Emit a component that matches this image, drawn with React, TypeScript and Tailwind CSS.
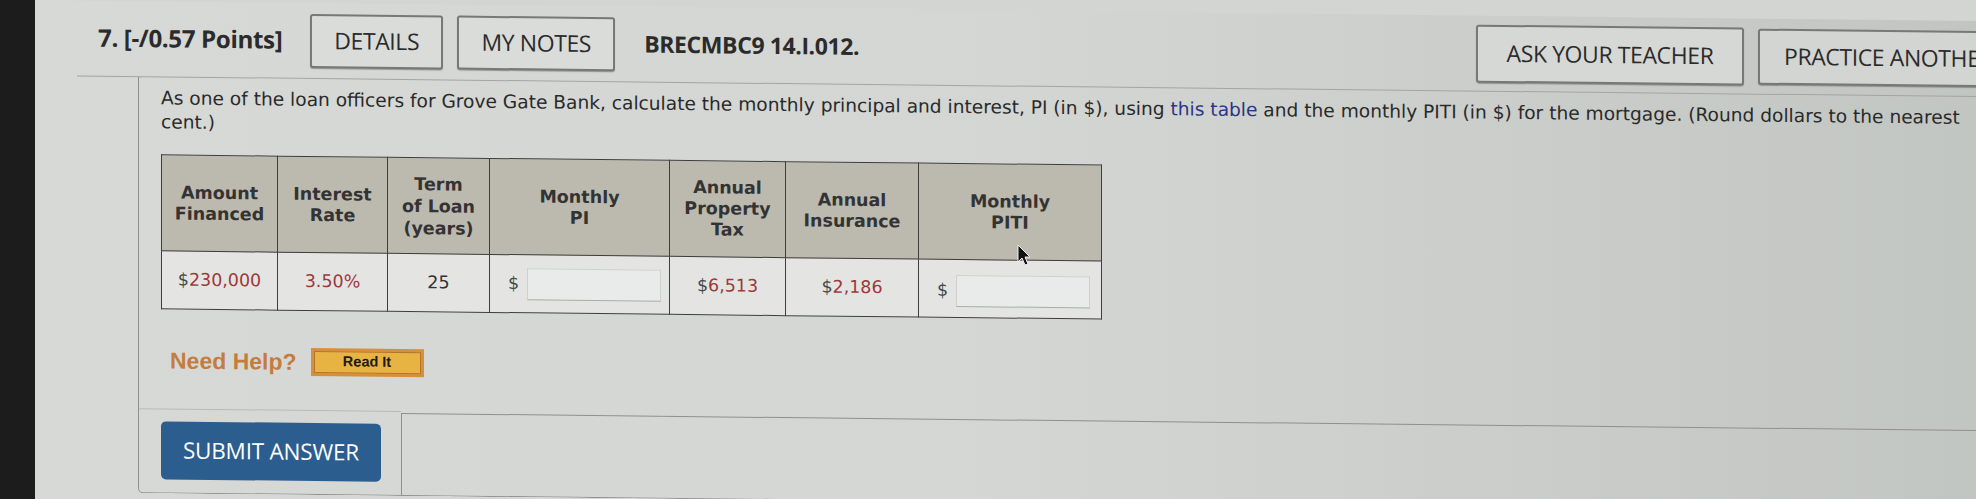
const cols = [116, 110, 102, 180, 116, 133, 183];

const Money: React.FC<{ value: string }> = ({ value }) => (
  <span>
    <span className="text-[#3f4a4a]">$</span>
    <span className="text-[#9c3a3a]">{value}</span>
  </span>
);

const AnswerBox: React.FC<{ top: string }> = ({ top }) => (
  <div className={`flex items-center pl-[18px] ${top}`}>
    <span className="text-[#3f4a4a]">$</span>
    <div className="ml-[8px] w-[134px] h-[32px] bg-[#e9eaea] border border-[#cfd1d0] border-b-[#a9abaa]" />
  </div>
);

export default function App() {
  return (
    <div className="relative w-[1976px] h-[499px] flex overflow-hidden bg-[#d2d5d2]">
      <div className="w-[35px] shrink-0 bg-[#1c1c1c]" />
      {/* the photo is slightly sheared: right side sits lower */}
      <div className="flex-1 h-[499px] flex flex-col origin-top-left skew-y-[0.62deg] bg-linear-to-r from-[#d7d9d7] via-[#d3d6d3] to-[#c2c6c3]">
        {/* question header */}
        <div className="h-[76px] shrink-0 ml-[42px] pl-[21px] border-b border-[#a3a5a3] flex items-center font-['Open_Sans',sans-serif] text-[#2b2b2b]">
          <span className="text-[24.2px] font-bold tracking-[-0.4px]">7. [-/0.57 Points]</span>
          <button className="ml-[28px] w-[133px] h-[54px] border-2 border-[#777977] rounded-[3px] bg-[#dadcda] shadow-[0_1px_1px_rgba(0,0,0,0.3)] text-[23px] tracking-[-0.4px]">
            DETAILS
          </button>
          <button className="ml-[14px] w-[158px] h-[54px] border-2 border-[#777977] rounded-[3px] bg-[#dadcda] shadow-[0_1px_1px_rgba(0,0,0,0.3)] text-[23px] tracking-[-0.4px]">
            MY NOTES
          </button>
          <span className="ml-[29px] text-[23px] font-bold tracking-[-0.4px]">BRECMBC9 14.I.012.</span>
          <div className="ml-auto -mr-[42px] flex items-center gap-[14px]">
            <button className="w-[268px] h-[58px] border-2 border-[#777977] rounded-[3px] bg-[#d6d8d6] shadow-[0_1px_1px_rgba(0,0,0,0.3)] text-[23px] tracking-[-0.4px]">
              ASK YOUR TEACHER
            </button>
            <button className="w-[260px] h-[56px] border-2 border-[#777977] rounded-[3px] bg-[#d2d5d2] shadow-[0_1px_1px_rgba(0,0,0,0.3)] text-[23px] tracking-[-0.4px] text-left pl-[24px] whitespace-nowrap">
              PRACTICE ANOTHER
            </button>
          </div>
        </div>

        {/* question body */}
        <div className="h-[416px] shrink-0 ml-[103px] border-l border-b border-[#8e908e] rounded-bl-[5px] flex flex-col">
          <p className="pl-[22px] pt-[9px] w-[1834px] font-['DejaVu_Sans',sans-serif] text-[18.6px] leading-[23.5px] text-[#2a2a2a]">
            As one of the loan officers for Grove Gate Bank, calculate the monthly principal and interest, PI (in $), using{" "}
            <span className="text-[#2b3585]">this table</span> and the monthly PITI (in $) for the mortgage. (Round dollars to the nearest cent.)
          </p>

          <table className="self-start w-[940px] ml-[22px] mt-[21px] table-fixed border-collapse font-['DejaVu_Sans',sans-serif] text-[17.5px] text-[#333]">
            <colgroup>
              {cols.map((w, i) => (
                <col key={i} style={{ width: w }} />
              ))}
            </colgroup>
            <thead>
              <tr className="h-[96px] bg-[#bcb9af]">
                <th className="border-[1.5px] border-[#3e3e3e] font-bold leading-[21px]">Amount<br />Financed</th>
                <th className="border-[1.5px] border-[#3e3e3e] font-bold leading-[21px]">Interest<br />Rate</th>
                <th className="border-[1.5px] border-[#3e3e3e] font-bold leading-[22px]">Term<br />of Loan<br />(years)</th>
                <th className="border-[1.5px] border-[#3e3e3e] font-bold leading-[21px]">Monthly<br />PI</th>
                <th className="border-[1.5px] border-[#3e3e3e] font-bold leading-[21px]">Annual<br />Property<br />Tax</th>
                <th className="border-[1.5px] border-[#3e3e3e] font-bold leading-[21px]">Annual<br />Insurance</th>
                <th className="border-[1.5px] border-[#3e3e3e] font-bold leading-[21px]">Monthly<br />PITI</th>
              </tr>
            </thead>
            <tbody>
              <tr className="h-[58px] bg-[#e4e5e3] text-center">
                <td className="border-[1.5px] border-[#3e3e3e]"><Money value="230,000" /></td>
                <td className="border-[1.5px] border-[#3e3e3e] text-[#9c3a3a]">3.50%</td>
                <td className="border-[1.5px] border-[#3e3e3e]">25</td>
                <td className="border-[1.5px] border-[#3e3e3e]"><AnswerBox top="" /></td>
                <td className="border-[1.5px] border-[#3e3e3e]"><Money value="6,513" /></td>
                <td className="border-[1.5px] border-[#3e3e3e]"><Money value="2,186" /></td>
                <td className="border-[1.5px] border-[#3e3e3e]"><AnswerBox top="mt-[4px]" /></td>
              </tr>
            </tbody>
          </table>

          <div className="mt-[34px] pl-[31px] flex items-center">
            <span className="font-['Liberation_Sans',sans-serif] font-bold text-[23px] text-[#c47d3e]">Need Help?</span>
            <div className="ml-[14px] w-[113px] h-[28px] bg-[#d88f3c] p-[3px]">
              <div className="w-full h-full bg-[#e7b443] border border-[#b5732c] flex items-center justify-center font-['Liberation_Sans',sans-serif] font-bold text-[14.5px] text-[#1f1a12]">
                Read It
              </div>
            </div>
          </div>

          <div className="mt-auto h-[84px] flex">
            <div className="w-[262px] border-t border-[#b8bab8] pl-[22px] pt-[12px]">
              <button className="w-[220px] h-[58px] rounded-[5px] bg-[#2c5d8f] text-white font-['Open_Sans',sans-serif] font-medium text-[22.5px] tracking-[-0.2px]">
                SUBMIT ANSWER
              </button>
            </div>
            <div className="flex-1 mt-[2px] border-t border-l border-[#8e908e]" />
          </div>
        </div>
      </div>

      {/* mouse pointer */}
      <svg className="absolute left-[1017px] top-[244px]" width="16" height="24" viewBox="0 0 16 24">
        <path d="M1 1 L1 18 L5 14 L8 21 L11 20 L8 13 L13 13 Z" fill="#111" stroke="#eee" strokeWidth="1" />
      </svg>
    </div>
  );
}
